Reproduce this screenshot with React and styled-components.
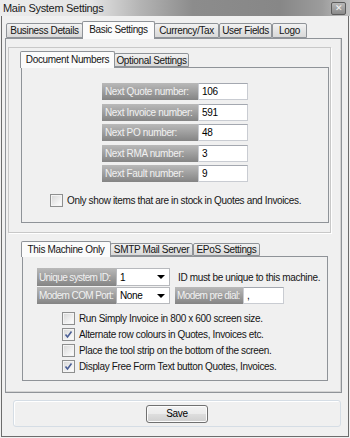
import React from "react";
import styled, { createGlobalStyle } from "styled-components";

const Global = createGlobalStyle`
  html, body { margin: 0; padding: 0; background: #f0f0f0; }
  * { box-sizing: border-box; }
`;

const Window = styled.div`
  width: 350px;
  height: 438px;
  display: flex;
  flex-direction: column;
  background: #f0f0f0;
  font-family: "Liberation Sans", Arial, sans-serif;
  font-size: 10px;
  letter-spacing: -0.35px;
  color: #151515;
  overflow: hidden;
`;

const TitleBar = styled.div`
  height: 16px;
  flex: none;
  display: flex;
  align-items: center;
  padding: 0 4px 0 3px;
  font-size: 11px;
  letter-spacing: -0.3px;
  background: linear-gradient(90deg, #ececec 0%, #e4e4e4 26%, #b4b4b4 40%, #8c8c8c 55%, #878787 80%, #9c9c9c 92%, #c2c2c2 100%);
  color: #1a1a1a;
`;

const Close = styled.div`
  margin-left: auto;
  width: 15px;
  height: 13px;
  border: 1px solid #5c5c5c;
  border-radius: 2px;
  background: linear-gradient(#b8b8b8, #8a8a8a);
  color: #f4f4f4;
  font-size: 9px;
  line-height: 11px;
  text-align: center;
`;

const Frame = styled.div`
  flex: 1;
  display: flex;
  flex-direction: column;
  margin: 0 1px 1px 1px;
  border: 1px solid #6c6c6c;
  border-top: none;
  padding: 4px 6px 0 3px;
`;

const TabStrip = styled.div`
  display: flex;
  align-items: flex-end;
  height: ${p => p.h}px;
  padding-left: ${p => p.pad || 0}px;
  margin-top: ${p => p.mt || 0}px;
  flex: none;
`;

const Tab = styled.div`
  width: ${p => p.w}px;
  height: ${p => (p.active ? p.th + 3 : p.th)}px;
  margin-bottom: ${p => (p.active ? -1 : 0)}px;
  position: relative;
  z-index: ${p => (p.active ? 2 : 1)};
  border: 1px solid #8f9398;
  border-bottom: ${p => (p.active ? "none" : "1px solid #8f9398")};
  border-radius: 2px 2px 0 0;
  margin-left: ${p => (p.active ? -1 : 0)}px;
  margin-right: ${p => (p.active ? -1 : 0)}px;
  background: ${p => (p.active ? "#fbfbfb" : "linear-gradient(#f2f2f2, #e2e2e2 60%, #d9d9d9)")};
  display: flex;
  justify-content: center;
  align-items: ${p => (p.active ? "flex-start" : "center")};
  padding-top: ${p => (p.active ? 2 : 0)}px;
  white-space: nowrap;
  overflow: hidden;
`;

const OuterPanel = styled.div`
  width: 337px;
  height: 355px;
  flex: none;
  border: 1px solid #8f9398;
  box-shadow: inset -3px -3px 0 -2px #d4d4d4;
  background: #f0f0f0;
  padding: 8px 0 0 2px;
  display: flex;
  flex-direction: column;
`;

const Group = styled.div`
  width: 323px;
  height: 186px;
  flex: none;
  border: 1px solid #c8c8c8;
  box-shadow: 1px 1px 0 #fff;
  padding: 0 0 0 12px;
  display: flex;
  flex-direction: column;
`;

const Page = styled.div`
  width: ${p => p.w}px;
  height: ${p => p.h}px;
  flex: none;
  margin-left: ${p => p.ml || 0}px;
  border: 1px solid #8f9398;
  background: #f0f0f0;
  padding: ${p => p.pad};
  display: flex;
  flex-direction: column;
`;

const Rows = styled.div`
  display: flex;
  flex-direction: column;
  gap: ${p => p.gap}px;
  margin-left: ${p => p.ml}px;
`;

const Row = styled.div`
  display: flex;
  align-items: center;
  height: ${p => p.h || 17}px;
`;

const Label = styled.div`
  width: ${p => p.w}px;
  height: 100%;
  margin-left: ${p => p.ml || 0}px;
  background: linear-gradient(#b9b9b9, #9c9c9c 55%, #848484);
  color: #f1f1f1;
  padding-left: ${p => (p.tight ? 2 : 3)}px;
  letter-spacing: ${p => (p.tight ? "-0.6px" : "inherit")};
  display: flex;
  align-items: center;
  white-space: nowrap;
  overflow: hidden;
  flex: none;
`;

const Field = styled.div`
  width: ${p => p.w}px;
  height: 100%;
  background: #fff;
  border: 1px solid #c9ccd2;
  border-top-color: #a4a8b0;
  padding-left: 3px;
  display: flex;
  align-items: center;
  flex: none;
  color: #000;
`;

const Select = styled(Field)`
  justify-content: space-between;
  padding-right: 4px;
  border-color: #b7b9bd;
`;

const Arrow = styled.span`
  width: 0;
  height: 0;
  border-left: 4px solid transparent;
  border-right: 4px solid transparent;
  border-top: 4px solid #000;
`;

const Note = styled.span`
  margin-left: 8px;
  white-space: nowrap;
`;

const CheckRow = styled.div`
  display: flex;
  align-items: center;
  height: 16px;
  gap: 4px;
  white-space: nowrap;
`;

const Box = styled.span`
  width: 13px;
  height: 13px;
  flex: none;
  border: 1px solid #8e8f8f;
  background: linear-gradient(135deg, #d6d6d6, #f4f4f4 70%, #ffffff);
  box-shadow: inset 0 0 0 1px #f4f4f4;
  display: flex;
  align-items: center;
  justify-content: center;
`;

const Checks = styled.div`
  display: flex;
  flex-direction: column;
  margin-left: ${p => p.ml}px;
  margin-top: ${p => p.mt}px;
`;

const SaveGroup = styled.div`
  margin: 7px 0 0 8px;
  width: 328px;
  height: 27px;
  border: 1px solid #d5dde5;
  border-radius: 3px;
  box-shadow: inset 1px 1px 0 #fff;
  display: flex;
  align-items: center;
  justify-content: center;
`;

const Button = styled.div`
  width: 62px;
  height: 18px;
  border: 1px solid #707070;
  border-radius: 3px;
  background: linear-gradient(#f2f2f2 0%, #ebebeb 48%, #dddddd 52%, #cfcfcf 100%);
  box-shadow: inset 0 0 0 1px #fcfcfc;
  text-align: center;
  line-height: 16px;
  color: #000;
`;

function Check({ checked, children }) {
  return (
    <CheckRow>
      <Box>
        {checked && (
          <svg width="9" height="9" viewBox="0 0 9 9">
            <path d="M1.5 4.5 L3.5 7 L7.5 1.5" fill="none" stroke="#4b5f96" strokeWidth="1.6" />
          </svg>
        )}
      </Box>
      {children}
    </CheckRow>
  );
}

const numbers = [
  ["Next Quote number:", "106"],
  ["Next Invoice number:", "591"],
  ["Next PO number:", "48"],
  ["Next RMA number:", "3"],
  ["Next Fault number:", "9"]
];

const options = [
  ["Run Simply Invoice in 800 x 600 screen size.", false],
  ["Alternate row colours in Quotes, Invoices etc.", true],
  ["Place the tool strip on the bottom of the screen.", false],
  ["Display Free Form Text button Quotes, Invoices.", true]
];

export default function App() {
  return (
    <Window>
      <Global />
      <TitleBar>
        Main System Settings
        <Close>✕</Close>
      </TitleBar>
      <Frame>
        <TabStrip h={18} pad={1}>
          <Tab w={77} th={15}>Business Details</Tab>
          <Tab w={73} th={15} active>Basic Settings</Tab>
          <Tab w={65} th={15}>Currency/Tax</Tab>
          <Tab w={53} th={15}>User Fields</Tab>
          <Tab w={35} th={15}>Logo</Tab>
        </TabStrip>
        <OuterPanel>
          <Group>
            <TabStrip h={19}>
              <Tab w={95} th={14} active>Document Numbers</Tab>
              <Tab w={75} th={14}>Optional Settings</Tab>
            </TabStrip>
            <Page w={308} h={156} pad="15px 0 0 0">
              <Rows gap={3.6} ml={80}>
                {numbers.map(([l, v]) => (
                  <Row key={l}>
                    <Label w={96}>{l}</Label>
                    <Field w={50}>{v}</Field>
                  </Row>
                ))}
              </Rows>
              <Checks ml={28} mt={10}>
                <Check>Only show items that are in stock in Quotes and Invoices.</Check>
              </Checks>
            </Page>
          </Group>
          <TabStrip h={16} pad={14} mt={7}>
            <Tab w={90} th={13} active>This Machine Only</Tab>
            <Tab w={83} th={13}>SMTP Mail Server</Tab>
            <Tab w={67} th={13}>EPoS Settings</Tab>
          </TabStrip>
          <Page w={306} h={125} ml={14} pad="11px 0 0 0">
            <Rows gap={1} ml={14}>
              <Row h={18}>
                <Label w={79} tight>Unique system ID:</Label>
                <Select w={54}>1<Arrow /></Select>
                <Note>ID must be unique to this machine.</Note>
              </Row>
              <Row h={17}>
                <Label w={79} tight>Modem COM Port:</Label>
                <Select w={54}>None<Arrow /></Select>
                <Label w={68} ml={5} tight>Modem pre dial:</Label>
                <Field w={41}>,</Field>
              </Row>
            </Rows>
            <Checks ml={39} mt={6}>
              {options.map(([t, c]) => (
                <Check key={t} checked={c}>{t}</Check>
              ))}
            </Checks>
          </Page>
        </OuterPanel>
        <SaveGroup>
          <Button>Save</Button>
        </SaveGroup>
      </Frame>
    </Window>
  );
}
